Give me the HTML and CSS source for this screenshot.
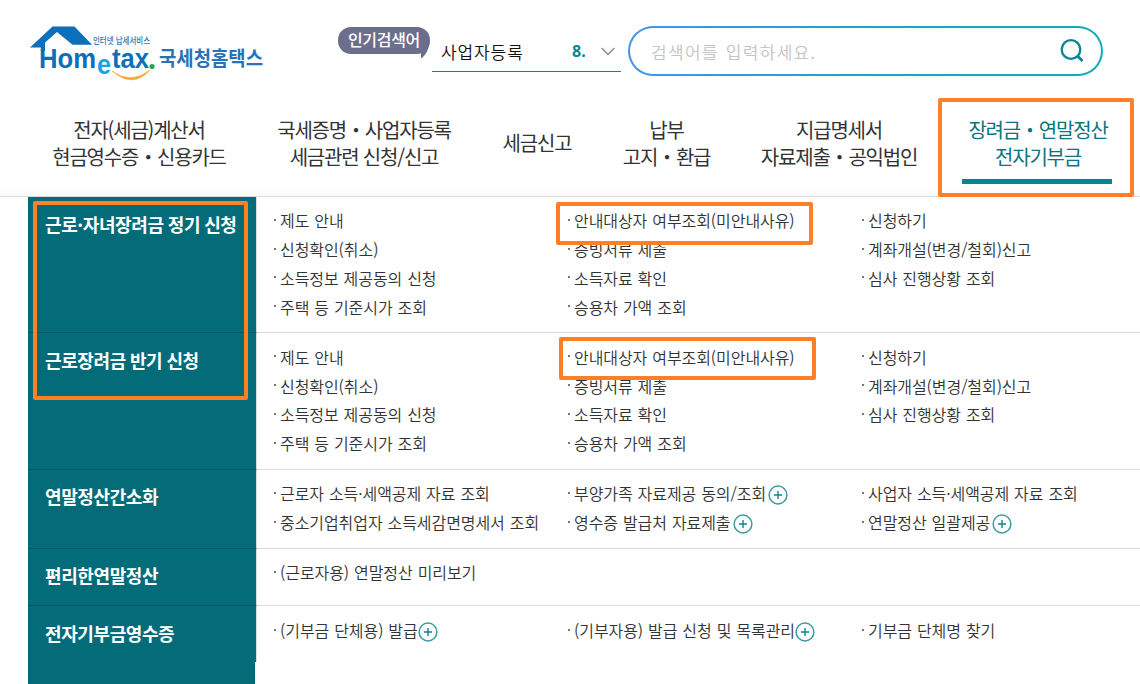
FILE: index.html
```html
<!DOCTYPE html>
<html lang="ko">
<head>
    <meta charset="UTF-8">
    <meta name="viewport" content="width=device-width, initial-scale=1.0">
    <title>국세청 홈택스</title>
    <link rel="stylesheet" href="styles.css">
</head>
<body>
    <svg class="symbols" width="0" height="0">
        <symbol id="plus" viewBox="0 0 20 20">
            <circle cx="10" cy="10" r="8.9" fill="#fff" stroke="#3f9ba3" stroke-width="1.5"/>
            <path d="M10 6v8M6 10h8" stroke="#0a8590" stroke-width="1.4"/>
        </symbol>
    </svg>

    <header class="header">
        <a class="logo">
            <svg width="240" height="58" viewBox="0 0 240 58">
                <path d="M22.500 .5H44.500L62 18.700H42.500L27 6L15 16.500V25H10.800V21.500H0Z" fill="#0b6fba"/>
                <text class="logo-sub" x="63" y="18" textLength="57" lengthAdjust="spacingAndGlyphs">인터넷 납세서비스</text>
                <text class="logo-main" x="9" y="41.500" textLength="57" lengthAdjust="spacingAndGlyphs">Hom</text>
                <text class="logo-e" x="67" y="47.500" textLength="14" lengthAdjust="spacingAndGlyphs">e</text>
                <text class="logo-main" x="82" y="41.500" textLength="37" lengthAdjust="spacingAndGlyphs">tax</text>
                <circle cx="122" cy="40.500" r="2.500" fill="#12a84c"/>
                <path d="M82 45Q101 59 120 44Q103 63 82 45Z" fill="#f6a52c" stroke="#f6a52c" stroke-width=".6"/>
                <text class="logo-ko" x="129" y="39.500" textLength="104" lengthAdjust="spacingAndGlyphs">국세청홈택스</text>
            </svg>
        </a>
        <div class="popular">
            <span class="popular-badge">인기검색어
                <svg class="popular-tail" width="16" height="14" viewBox="0 0 16 14"><path d="M0 6L15 0Q14 7 8.500 12.500Q7 14 7 12V8Z" fill="#6b6f8b"/></svg>
            </span>
            <div class="popular-select">
                <span class="popular-word">사업자등록</span>
                <b class="popular-rank">8.</b>
                <svg width="14" height="9" viewBox="0 0 14 9"><path d="M.7 1L7 7.500L13.300 1" fill="none" stroke="#8c8c8c" stroke-width="1.500"/></svg>
            </div>
        </div>
        <div class="search">
            <span class="search-text">검색어를 입력하세요.</span>
            <svg width="24" height="24" viewBox="0 0 24 24" fill="none" stroke="#078591" stroke-width="2.300">
                <circle cx="11" cy="10.500" r="9.300"/>
                <path d="M17.500 17L22.500 22" stroke-width="2.600"/>
            </svg>
        </div>
    </header>

    <nav class="gnb">
        <a>전자(세금)계산서<br>현금영수증・신용카드</a>
        <a>국세증명・사업자등록<br>세금관련 신청/신고</a>
        <a>세금신고</a>
        <a>납부<br>고지・환급</a>
        <a>지급명세서<br>자료제출・공익법인</a>
        <a class="active">장려금・연말정산<br>전자기부금</a>
    </nav>

    <main class="menu">
        <section class="menu-row tall">
            <h2>근로·자녀장려금 정기 신청</h2>
            <div class="links">
                <ul>
                    <li>제도 안내</li>
                    <li>신청확인(취소)</li>
                    <li>소득정보 제공동의 신청</li>
                    <li>주택 등 기준시가 조회</li>
                </ul>
                <ul>
                    <li>안내대상자 여부조회(미안내사유)</li>
                    <li>증빙서류 제출</li>
                    <li>소득자료 확인</li>
                    <li>승용차 가액 조회</li>
                </ul>
                <ul>
                    <li>신청하기</li>
                    <li>계좌개설(변경/철회)신고</li>
                    <li>심사 진행상황 조회</li>
                </ul>
            </div>
        </section>
        <section class="menu-row tall second">
            <h2>근로장려금 반기 신청</h2>
            <div class="links">
                <ul>
                    <li>제도 안내</li>
                    <li>신청확인(취소)</li>
                    <li>소득정보 제공동의 신청</li>
                    <li>주택 등 기준시가 조회</li>
                </ul>
                <ul>
                    <li>안내대상자 여부조회(미안내사유)</li>
                    <li>증빙서류 제출</li>
                    <li>소득자료 확인</li>
                    <li>승용차 가액 조회</li>
                </ul>
                <ul>
                    <li>신청하기</li>
                    <li>계좌개설(변경/철회)신고</li>
                    <li>심사 진행상황 조회</li>
                </ul>
            </div>
        </section>
        <section class="menu-row medium">
            <h2>연말정산간소화</h2>
            <div class="links">
                <ul>
                    <li>근로자 소득·세액공제 자료 조회</li>
                    <li>중소기업취업자 소득세감면명세서 조회</li>
                </ul>
                <ul>
                    <li>부양가족 자료제공 동의/조회<svg class="plus"><use href="#plus"/></svg></li>
                    <li>영수증 발급처 자료제출<svg class="plus"><use href="#plus"/></svg></li>
                </ul>
                <ul>
                    <li>사업자 소득·세액공제 자료 조회</li>
                    <li>연말정산 일괄제공<svg class="plus"><use href="#plus"/></svg></li>
                </ul>
            </div>
        </section>
        <section class="menu-row short">
            <h2>편리한연말정산</h2>
            <div class="links">
                <ul>
                    <li>(근로자용) 연말정산 미리보기</li>
                </ul>
            </div>
        </section>
        <section class="menu-row last">
            <h2>전자기부금영수증</h2>
            <div class="links">
                <ul>
                    <li>(기부금 단체용) 발급<svg class="plus"><use href="#plus"/></svg></li>
                </ul>
                <ul>
                    <li>(기부자용) 발급 신청 및 목록관리<svg class="plus"><use href="#plus"/></svg></li>
                </ul>
                <ul>
                    <li>기부금 단체명 찾기</li>
                </ul>
            </div>
        </section>
        <div class="menu-fill"></div>
    </main>

    <!-- 강조 표시 -->
    <div class="mark mark-tab"></div>
    <div class="mark mark-side"></div>
    <div class="mark mark-first"></div>
    <div class="mark mark-second"></div>
</body>
</html>
```
FILE: styles.css
```css
* {
    box-sizing: border-box;
}
body {
    position: relative;
    width: 1140px;
    height: 684px;
    margin: 0;
    overflow: hidden;
    background: #fff;
    color: #333;
    font-family: "Noto Sans CJK KR", sans-serif;
}
.symbols {
    position: absolute;
}

/* header */
.header {
    display: flex;
    align-items: flex-start;
    height: 97px;
    padding: 26px 0 0 30px;
}
.logo {
    width: 308px;
}
.logo svg {
    display: block;
    overflow: visible;
}
.logo-main,
.logo-e {
    font: bold 27px "Liberation Sans", sans-serif;
    fill: #0b6fba;
}
.logo-e {
    fill: #12a5e0;
}
.logo-sub {
    font-size: 9px;
    font-weight: 500;
    fill: #2477b8;
}
.logo-ko {
    font-size: 20px;
    font-weight: bold;
    fill: #2773b9;
}
.popular {
    display: flex;
    width: 290px;
}
.popular-badge {
    position: relative;
    width: 92px;
    height: 27px;
    margin: 1px 2px 0 0;
    border-radius: 13px;
    background: #6b6f8b;
    color: #fff;
    font-size: 16px;
    font-weight: 500;
    letter-spacing: -0.3px;
    line-height: 25px;
    text-align: center;
}
.popular-tail {
    position: absolute;
    right: 0;
    top: 18px;
}
.popular-select {
    display: flex;
    align-items: center;
    width: 189px;
    height: 46px;
    padding: 5px 5px 0 9px;
    border-bottom: 1px solid #078591;
}
.popular-word {
    width: 131px;
    color: #111;
    font-size: 17px;
    font-weight: 350;
    letter-spacing: 0.9px;
}
.popular-rank {
    width: 29px;
    color: #078591;
    font: bold 16px "Noto Sans", sans-serif;
}
.search {
    display: flex;
    align-items: center;
    justify-content: space-between;
    width: 475px;
    height: 50px;
    padding: 0 17px 0 21px;
    border: 2px solid transparent;
    border-radius: 25px;
    background: linear-gradient(#fff, #fff) padding-box, linear-gradient(90deg, #4593e8, #13abb8 70%) border-box;
}
.search-text {
    color: #c4c4c4;
    font-size: 17px;
    font-weight: 350;
    letter-spacing: 1.3px;
    word-spacing: 1px;
}

/* main tabs */
.gnb {
    display: grid;
    grid-template-columns: 174px 174px 70px 87px 156px 140px;
    column-gap: 51px;
    align-items: center;
    height: 100px;
    padding: 0 0 8px 52px;
    border-bottom: 1px solid #dcdcdc;
    background: linear-gradient(#fff 90px, #fafafa);
}
.gnb a {
    position: relative;
    display: flex;
    justify-content: center;
    font-size: 20px;
    letter-spacing: -1.2px;
    line-height: 27px;
    text-align: center;
    white-space: nowrap;
}
.gnb .active {
    color: #0b7580;
}
.gnb .active::after {
    content: "";
    position: absolute;
    left: -6px;
    top: 63px;
    width: 150px;
    height: 5px;
    background: #078591;
}

/* sub menu */
.menu-row {
    display: grid;
    grid-template-columns: 229px 1fr;
    padding-left: 28px;
}
.tall {
    height: 136px;
}
.second {
    height: 137px;
}
.medium {
    height: 79px;
}
.short {
    height: 57px;
}
.last {
    height: 56px;
}
.menu-row h2 {
    margin: 0;
    padding: 14px 0 0 17px;
    border-right: 1px solid #d5dfe1;
    border-bottom: 1px solid #0c5865;
    background: #046c79;
    color: #fff;
    font-size: 18px;
    font-weight: bold;
    letter-spacing: -0.4px;
    word-spacing: -0.5px;
    line-height: 26px;
    white-space: nowrap;
}
.medium h2,
.short h2 {
    padding-top: 13px;
}
.links {
    display: grid;
    grid-template-columns: repeat(3, 294px);
    padding: 9px 0 0 17px;
    border-bottom: 1px solid #dcdcdc;
}
.last h2,
.last .links {
    border-bottom: 0;
}
.links ul {
    margin: 0;
    padding: 0;
    list-style: none;
}
.links li {
    display: flex;
    align-items: center;
    height: 28.8px;
    font-size: 16px;
    font-weight: 350;
    letter-spacing: -0.07px;
    word-spacing: 0.6px;
    white-space: nowrap;
}
.second .links {
    padding-top: 9.5px;
}
.last .links {
    padding-top: 10px;
}
.links li::before {
    content: "";
    width: 2px;
    height: 2px;
    margin: 0 4px 1px 0;
    background: #777;
}
.plus {
    width: 20px;
    height: 20px;
    margin: 4px 0 0 2px;
}
.last .plus {
    margin-left: 0;
}
.menu-fill {
    width: 227px;
    height: 22px;
    margin-left: 28px;
    background: #046c79;
}

/* highlight frames over the menu */
.mark {
    position: absolute;
    border: 4px solid #ff7f27;
    border-radius: 2px;
}
.mark-tab {
    left: 938px;
    top: 98px;
    width: 196px;
    height: 99px;
}
.mark-side {
    left: 33px;
    top: 201px;
    width: 215px;
    height: 199px;
}
.mark-first {
    left: 556px;
    top: 202px;
    width: 257px;
    height: 43px;
}
.mark-second {
    left: 559px;
    top: 337px;
    width: 257px;
    height: 43px;
}
```
